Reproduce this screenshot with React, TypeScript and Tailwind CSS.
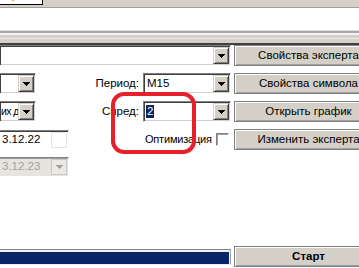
import React from 'react'

function Arrow({ gray }: { gray?: boolean }) {
  return (
    <svg width="7" height="4" viewBox="0 0 7 4" shapeRendering="crispEdges">
      <path d="M0 0h7v1H0zM1 1h5v1H1zM2 2h3v1H2zM3 3h1v1H3z" fill={gray ? '#a0a0a0' : '#000'} />
    </svg>
  )
}

function DropBtn({ gray }: { gray?: boolean }) {
  return (
    <div className="flex h-full w-[16px] shrink-0 items-center justify-center border border-t-[#d4d0c8] border-l-[#d4d0c8] border-b-[#404040] border-r-[#404040] bg-[#d4d0c8] shadow-[inset_1px_1px_0_#fff,inset_-1px_-1px_0_#808080]">
      <Arrow gray={gray} />
    </div>
  )
}

function Combo({ width, children, cutLeft, disabled }: { width: string; children?: React.ReactNode; cutLeft?: boolean; disabled?: boolean }) {
  return (
    <div
      className={`flex h-[21px] shrink-0 border border-t-[#808080] border-l-[#808080] border-r-white border-b-white p-[1px] shadow-[inset_1px_1px_0_#404040,inset_-1px_-1px_0_#d4d0c8] ${width} ${cutLeft ? 'border-l-0' : ''} ${disabled ? 'bg-[#d4d0c8]' : 'bg-white'}`}
    >
      <div className="flex min-w-0 flex-1 items-center overflow-hidden whitespace-nowrap">{children}</div>
      <DropBtn gray={disabled} />
    </div>
  )
}

function Button({ children, bold }: { children: React.ReactNode; bold?: boolean }) {
  return (
    <div className={`ml-[3px] flex h-[21px] w-[149px] shrink-0 items-center justify-center border border-[#808080] bg-[#d4d0c8] text-black shadow-[inset_1px_1px_0_#fff,inset_-1px_-1px_0_#a0a0a0] ${bold ? 'font-bold' : ''}`}>
      {children}
    </div>
  )
}

export default function App() {
  return (
    <div className="relative flex h-[268px] w-[359px] flex-col overflow-hidden bg-white font-['Liberation_Sans',Arial,sans-serif] text-[11.5px] leading-none text-black">
      {/* Tabs strip */}
      <div className="flex h-[5px] shrink-0 bg-[#d4d0c8]">
        <div className="relative h-full w-[43px] border-r border-b border-black bg-white">
          <span className="absolute left-[12px] top-0 h-[1px] w-[2px] bg-[#f0a030]" />
        </div>
      </div>
      <div className="h-[2px] shrink-0 bg-[#d4d0c8]" />
      <div className="h-[1px] shrink-0 bg-[#a0a0a0]" />
      <div className="h-[22px] shrink-0 bg-white" />
      <div className="h-[1px] shrink-0 bg-[#e0e0e0]" />
      <div className="h-[2px] shrink-0 bg-[#a8a8a8]" />
      <div className="h-[2px] shrink-0 bg-[#f4f4f4]" />
      <div className="h-[3px] shrink-0 bg-[#d4d0c8]" />
      <div className="h-[1px] shrink-0 bg-[#ececec]" />
      <div className="h-[4px] shrink-0 bg-[#d4d0c8]" />
      <div className="h-[2px] shrink-0 bg-[#404040]" />

      {/* Settings rows */}
      <div className="flex flex-col gap-[7px]">
        <div className="flex">
          <Combo width="w-[231px]" cutLeft />
          <Button>Свойства эксперта</Button>
        </div>

        <div className="flex items-center">
          <Combo width="w-[36px]" cutLeft />
          <div className="w-[107px] shrink-0 pr-[4px] text-right">Период:</div>
          <Combo width="w-[88px]">
            <span className="pl-[2px]">M15</span>
          </Combo>
          <Button>Свойства символа</Button>
        </div>

        <div className="flex items-center">
          <Combo width="w-[36px]" cutLeft>
            <span className="text-[10.5px] tracking-[-0.6px]">их д</span>
          </Combo>
          <div className="w-[107px] shrink-0 pr-[4px] text-right">Спред:</div>
          <Combo width="w-[88px]">
            <span className="ml-[1px] flex h-[13px] items-center bg-[#0a246a] px-[1px] text-white">2</span>
          </Combo>
          <Button>Открыть график</Button>
        </div>

        <div className="flex items-center">
          <div className="flex h-[20px] w-[69px] shrink-0 border-t border-r border-b border-t-[#808080] border-r-white border-b-white bg-white p-[1px] shadow-[inset_0_1px_0_#404040]">
            <div className="flex flex-1 items-center pl-[1px]">3.12.22</div>
            <div className="h-full w-[16px] border border-[#e4e4e4] bg-white" />
          </div>
          <div className="w-[75px] shrink-0" />
          <div className="flex w-[87px] shrink-0 items-center">
            <span className="pl-[1px] text-[11px] tracking-[-0.2px]">Оптимизация</span>
            <div className="ml-auto mr-[2px] h-[13px] w-[13px] shrink-0 border border-t-[#808080] border-l-[#808080] border-r-white border-b-white bg-white shadow-[inset_1px_1px_0_#a0a0a0]" />
          </div>
          <Button>Изменить эксперта</Button>
        </div>

        <div className="flex items-center">
          <div className="flex h-[20px] w-[69px] shrink-0 border-t border-r border-b border-t-[#808080] border-r-white border-b-white bg-[#e6e4df] p-[1px] shadow-[inset_0_1px_0_#a0a0a0]">
            <div className="flex flex-1 items-center pl-[1px] text-[#a0a0a0]">3.12.23</div>
            <div className="flex h-full w-[16px] items-center justify-center border border-[#c8c8c8] bg-[#ebe9e4]">
              <Arrow gray />
            </div>
          </div>
        </div>
      </div>

      <div className="flex-1" />

      {/* Progress + start */}
      <div className="flex h-[21px] shrink-0 items-center">
        <div className="flex h-[16px] w-[231px] shrink-0 flex-col border-t border-r border-b border-t-[#808080] border-r-[#a0a0a0] border-b-[#ececec] bg-[#f0f0f0] pt-[2px] pr-[1px]">
          <div className="flex-1 bg-[#0a246a]" />
        </div>
        <Button bold>Старт</Button>
      </div>
      <div className="h-[1px] shrink-0 bg-white" />

      {/* Red annotation frame */}
      <div className="pointer-events-none absolute left-[111px] top-[92px] h-[62px] w-[85px] rounded-[13px] border-4 border-[#e8202a]" />
    </div>
  )
}
